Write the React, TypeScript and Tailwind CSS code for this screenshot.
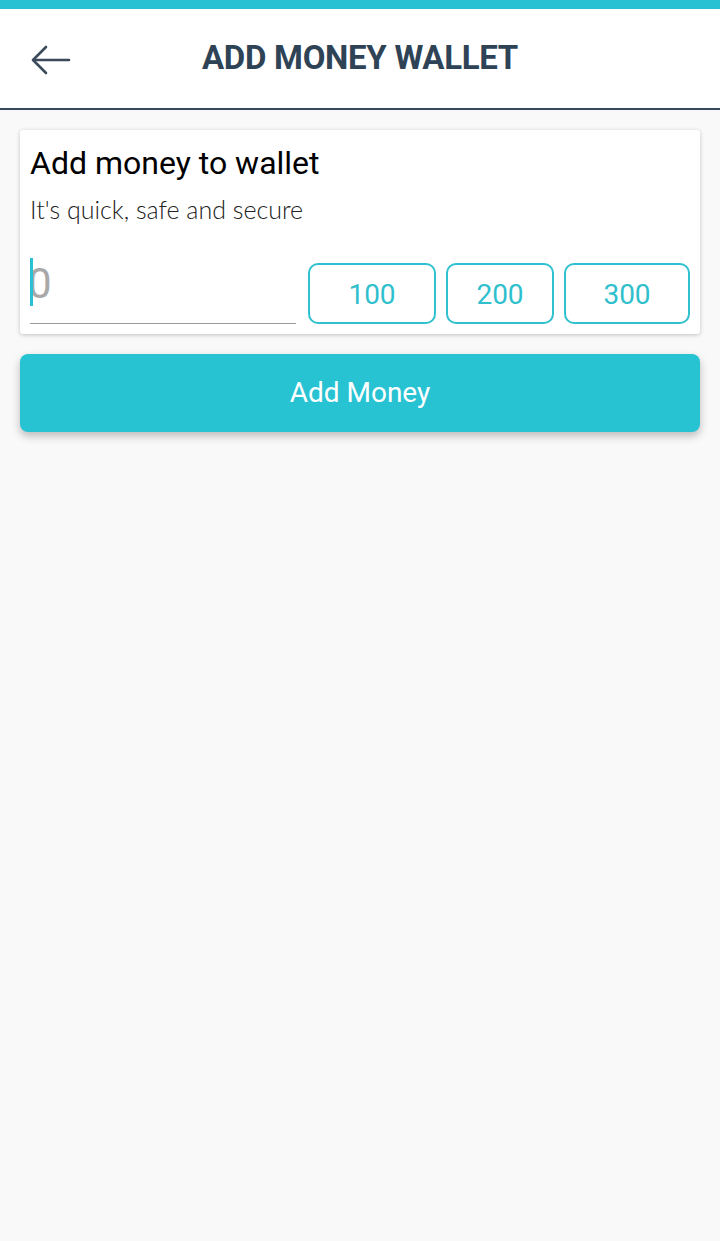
import React from "react";

export default function App() {
  return (
    <div className="w-[720px] h-[1241px] bg-[#f9f9f9] flex flex-col" style={{ fontFamily: "Roboto, 'Liberation Sans', sans-serif" }}>
      <div className="h-[9px] bg-[#27c1d3] shrink-0" />
      <div className="h-[101px] bg-white border-b-2 border-[#36495c] flex items-center relative shrink-0">
        <div className="absolute left-[30px] top-[35px]">
          <svg width="42" height="32" viewBox="0 0 42 32" fill="none" stroke="#3a4a5a" strokeWidth="2.6" strokeLinecap="round" strokeLinejoin="round">
            <path d="M39 16H4" />
            <path d="M16 3L3 16l13 13" />
          </svg>
        </div>
        <div className="w-full text-center text-[33px] font-bold text-[#2f4356] tracking-[-0.3px] pb-[1px]">ADD MONEY WALLET</div>
      </div>
      <div className="px-[20px] pt-[20px] flex flex-col">
        <div className="bg-white rounded-[3px] shadow-[0_1px_4px_rgba(0,0,0,0.22)] px-[10px] pt-[14px] h-[204px]">
          <div className="text-[32px] leading-[38px] text-black">Add money to wallet</div>
          <div className="text-[25px] leading-[30px] text-[#222] font-light mt-[12px]" style={{ fontFamily: "Lato, 'Open Sans', sans-serif" }}>It's quick, safe and secure</div>
          <div className="flex items-end mt-[32px] gap-[10px]">
            <div className="w-[266px] h-[68px] border-b border-[#9a9a9a] relative mr-[2px]">
              <div className="absolute left-0 top-[2px] w-[3px] h-[48px] bg-[#27c1d3] z-10" />
              <div className="absolute left-[-2px] top-[2px] text-[42px] leading-[52px] text-[#a8a8a8]">0</div>
            </div>
            <button className="w-[128px] h-[61px] rounded-[10px] border-2 border-[#2fc1cf] text-[#2fbfcd] text-[28px] pt-[2px]">100</button>
            <button className="w-[108px] h-[61px] rounded-[10px] border-2 border-[#2fc1cf] text-[#2fbfcd] text-[28px] pt-[2px]">200</button>
            <button className="w-[126px] h-[61px] rounded-[10px] border-2 border-[#2fc1cf] text-[#2fbfcd] text-[28px] pt-[2px]">300</button>
          </div>
        </div>
        <button className="mt-[20px] h-[78px] w-full rounded-[8px] bg-[#27c3d3] text-white text-[28px] shadow-[0_4px_8px_rgba(0,0,0,0.25)]">Add Money</button>
      </div>
    </div>
  );
}
